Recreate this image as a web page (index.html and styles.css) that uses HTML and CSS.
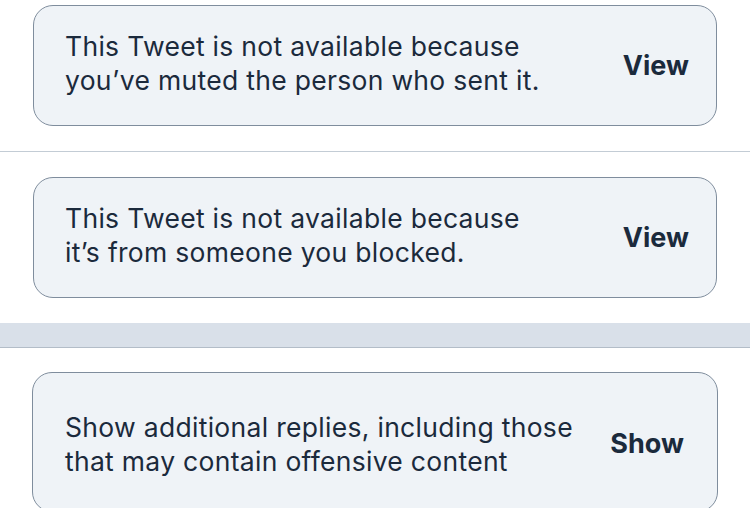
FILE: index.html
```html
<!DOCTYPE html>
<html lang="en">
<head>
<meta charset="utf-8">
<title>Replies</title>
<link rel="stylesheet" href="styles.css">
</head>
<body>
  <div class="thread">
    <div class="item item--first">
      <div class="notice">
        <p class="notice__text">This Tweet is not available because<br>you’ve muted the person who sent it.</p>
        <span class="notice__action">View</span>
      </div>
    </div>
    <div class="item item--second">
      <div class="notice">
        <p class="notice__text">This Tweet is not available because<br>it’s from someone you blocked.</p>
        <span class="notice__action">View</span>
      </div>
    </div>
    <div class="band"></div>
    <div class="item item--third">
      <div class="notice notice--tall">
        <p class="notice__text">Show additional replies, including those<br>that may contain offensive content</p>
        <span class="notice__action notice__action--show">Show</span>
      </div>
    </div>
  </div>
</body>
</html>
```
FILE: styles.css
```css
html, body {
  margin: 0;
  padding: 0;
  background: #ffffff;
}

body {
  font-family: Inter, "Noto Sans", "Liberation Sans", sans-serif;
  color: #1b2a3c;
  overflow: hidden;
}

.thread {
  display: flex;
  flex-direction: column;
}

.item {
  padding: 0 33px;
}

.item--first {
  padding-top: 5px;
  padding-bottom: 25px;
  border-bottom: 1px solid #c3ccd5;
}

.item--second {
  padding-top: 25px;
  padding-bottom: 25px;
}

.item--third {
  padding: 24px 32px 0;
}

.band {
  height: 24px;
  background: #d9e0e9;
  border-bottom: 1px solid #b3bdc8;
}

.notice {
  display: flex;
  align-items: center;
  box-sizing: border-box;
  height: 121px;
  padding: 23px 27px 28px 31px;
  background: #eff3f7;
  border: 1px solid #7f8d9d;
  border-radius: 20px;
}

.notice--tall {
  height: 140px;
  padding: 37px 33px 33px 32px;
}

.notice__text {
  flex: 1;
  margin: 0;
  font-size: 26.5px;
  line-height: 34px;
  font-weight: 400;
  letter-spacing: 0.3px;
  white-space: nowrap;
}

.notice__action {
  font-size: 27px;
  line-height: 34px;
  font-weight: 700;
  padding-top: 6px;
}

.notice__action--show {
  padding-top: 0;
}
```
